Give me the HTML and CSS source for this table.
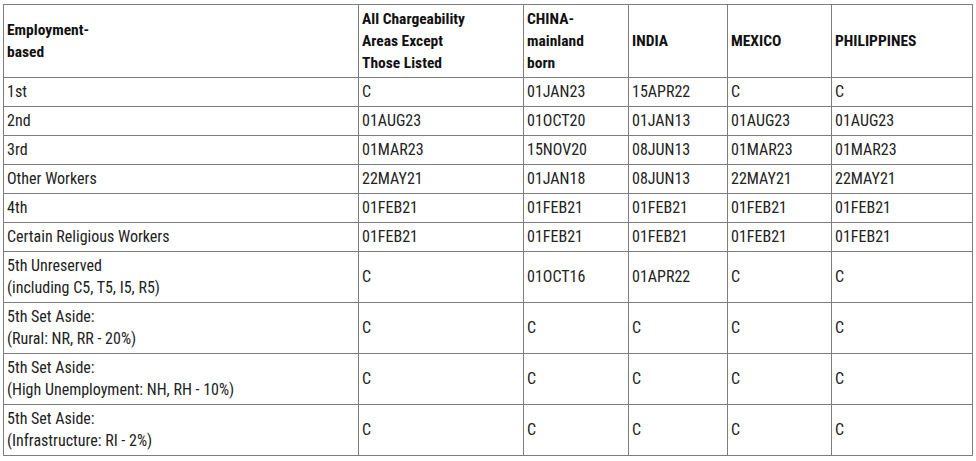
FILE: index.html
```html
<!DOCTYPE html>
<html>
<head>
<meta charset="utf-8">
<link rel="stylesheet" href="styles.css">
</head>
<body>
<table class="bulletin">
  <colgroup>
    <col class="c1"><col class="c2"><col class="c3"><col class="c4"><col class="c5"><col class="c6">
  </colgroup>
  <thead>
    <tr>
      <th>Employment-<br>based</th>
      <th>All Chargeability<br>Areas Except<br>Those Listed</th>
      <th>CHINA-<br>mainland<br>born</th>
      <th>INDIA</th>
      <th>MEXICO</th>
      <th>PHILIPPINES</th>
    </tr>
  </thead>
  <tbody>
    <tr><td>1st</td><td>C</td><td>01JAN23</td><td>15APR22</td><td>C</td><td>C</td></tr>
    <tr><td>2nd</td><td>01AUG23</td><td>01OCT20</td><td>01JAN13</td><td>01AUG23</td><td>01AUG23</td></tr>
    <tr><td>3rd</td><td>01MAR23</td><td>15NOV20</td><td>08JUN13</td><td>01MAR23</td><td>01MAR23</td></tr>
    <tr><td>Other Workers</td><td>22MAY21</td><td>01JAN18</td><td>08JUN13</td><td>22MAY21</td><td>22MAY21</td></tr>
    <tr><td>4th</td><td>01FEB21</td><td>01FEB21</td><td>01FEB21</td><td>01FEB21</td><td>01FEB21</td></tr>
    <tr><td>Certain Religious Workers</td><td>01FEB21</td><td>01FEB21</td><td>01FEB21</td><td>01FEB21</td><td>01FEB21</td></tr>
    <tr><td>5th Unreserved<br>(including C5, T5, I5, R5)</td><td>C</td><td>01OCT16</td><td>01APR22</td><td>C</td><td>C</td></tr>
    <tr><td>5th Set Aside:<br>(Rural: NR, RR - 20%)</td><td>C</td><td>C</td><td>C</td><td>C</td><td>C</td></tr>
    <tr><td>5th Set Aside:<br>(High Unemployment: NH, RH - 10%)</td><td>C</td><td>C</td><td>C</td><td>C</td><td>C</td></tr>
    <tr><td>5th Set Aside:<br>(Infrastructure: RI - 2%)</td><td>C</td><td>C</td><td>C</td><td>C</td><td>C</td></tr>
  </tbody>
</table>
</body>
</html>
```
FILE: styles.css
```css
html, body {
  margin: 0;
  padding: 0;
  background: #ffffff;
}
body {
  padding: 4px 0 0 3px;
  font-family: "Roboto Condensed", Roboto, "Liberation Sans", sans-serif;
  font-stretch: condensed;
  font-size: 16px;
  color: #222222;
}
.bulletin {
  border-collapse: collapse;
  table-layout: fixed;
  width: 969px;
}
.c1 { width: 355px; }
.c2 { width: 165px; }
.c3 { width: 105px; }
.c4 { width: 99px; }
.c5 { width: 104px; }
.c6 { width: 141px; }
.bulletin th,
.bulletin td {
  border: 1px solid #7d7d7d;
  padding: 3px 3px 3px 3px;
  line-height: 22px;
  text-align: left;
  vertical-align: middle;
}
.bulletin th {
  font-size: 15.5px;
  font-weight: 700;
  color: #111111;
}
```
